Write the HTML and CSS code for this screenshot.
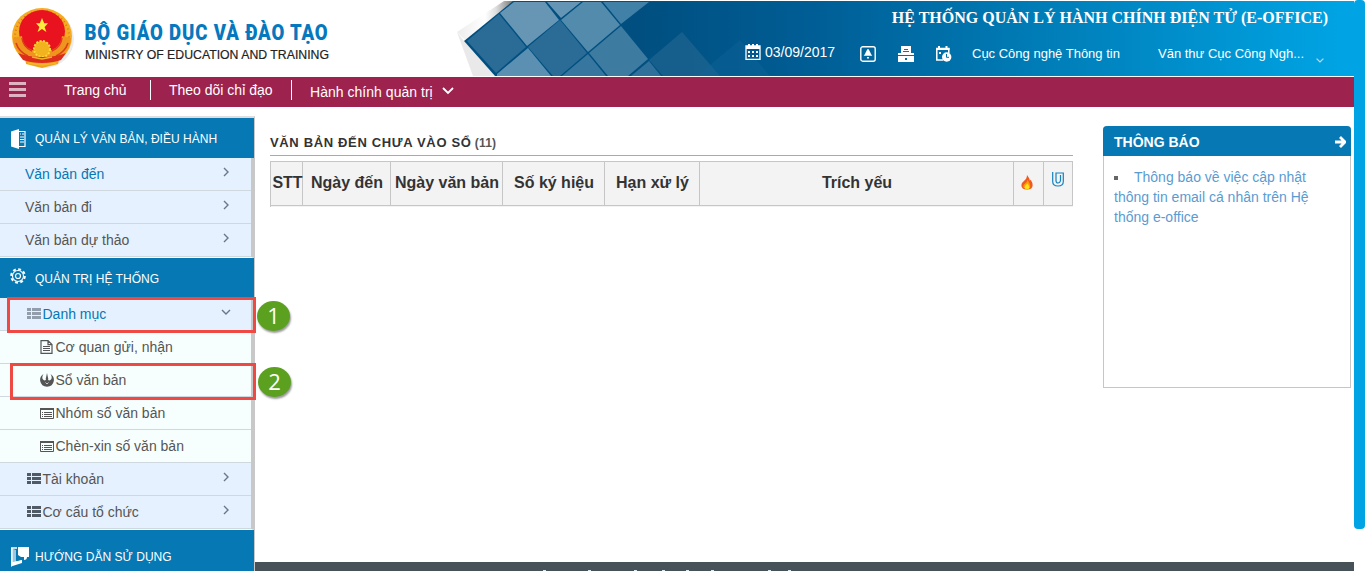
FILE: index.html
```html
<!DOCTYPE html>
<html lang="vi">
<head>
<meta charset="utf-8">
<title>E-Office</title>
<link rel="stylesheet" href="styles.css">
</head>
<body>
<svg class="defs" width="0" height="0">
  <symbol id="chev-right" viewBox="0 0 6 10"><path d="M1 1l4 4-4 4" fill="none" stroke="#68788a" stroke-width="1.4"/></symbol>
  <symbol id="list" viewBox="0 0 14 11"><path d="M0 0h4v3H0zM5 0h9v3H5zM0 4h4v3H0zM5 4h9v3H5zM0 8h4v3H0zM5 8h9v3H5z" fill="currentColor"/></symbol>
  <symbol id="card" viewBox="0 0 14 11"><path d="M.5.5h13v10H.5z" fill="none" stroke="#555"/><path d="M0 0h14v2H0zM2 4h1v1H2zM4 4h8v1H4zM2 6h1v1H2zM4 6h8v1H4zM2 8h1v1H2zM4 8h8v1H4z" fill="#555"/></symbol>
</svg>
<div class="page">
  <div class="screen">
    <header class="top">
      <svg class="logo" width="340" height="75" viewBox="0 1 340 75">
        <ellipse cx="44" cy="39" rx="30" ry="29" fill="#ddd" opacity=".6"/>
        <path d="M25 56l1 8 16 4 16-4 2-8z" fill="#f0a41c"/>
        <ellipse cx="42" cy="36.500" rx="30" ry="28.500" fill="#f6ac22"/>
        <ellipse cx="42" cy="36.500" rx="27" ry="25.500" fill="none" stroke="#dd7a1a" stroke-width="2" stroke-dasharray="1 3"/>
        <ellipse cx="42" cy="31.500" rx="23" ry="21.500" fill="#e8131f"/>
        <path d="M42 18l2.200 5.200H48l-3.400 3.700 1.800 5.200-4.400-3-4.400 3 1.800-5.200-3.400-3.700h3.800z" fill="#ffec3d"/>
        <path d="M13 38l9-2q0 10 10 14h20q9-4 10-14l9 2q-1 15-14 20H28Q14 53 13 38z" fill="#ef941c"/>
        <path d="M22 38q1 9 10 13M62 38q-1 9-10 13M16 43q3 9 12 13M68 43q-3 9-12 13" fill="none" stroke="#df3a1c" stroke-width="1.500"/>
        <circle cx="42" cy="49" r="8" fill="#f2b41e" stroke="#ffd83a" stroke-width="2" stroke-dasharray="2 1.500"/>
        <path d="M18 53q10 4 24 4t24-4l-5 7q-8 3-19 3t-19-3z" fill="#de2c1c"/>
        <path d="M32 57l10 2 10-2M28 63l14 2 14-2" fill="none" stroke="#f3b62a" stroke-width="1.500"/>
        <text class="brand" x="84.500" y="39.500" textLength="244" lengthAdjust="spacingAndGlyphs">BỘ GIÁO DỤC VÀ ĐÀO TẠO</text>
        <text class="brand-sub" x="85" y="59.300" textLength="244" lengthAdjust="spacingAndGlyphs">MINISTRY OF EDUCATION AND TRAINING</text>
      </svg>
      <div class="banner">
        <svg class="banner-art" width="914" height="75" viewBox="440 1 914 75">
          <defs>
            <linearGradient id="sky" gradientUnits="userSpaceOnUse" x1="640" y1="0" x2="1345" y2="0"><stop offset="0" stop-color="#004f80"/><stop offset=".25" stop-color="#005e96"/><stop offset=".55" stop-color="#007bb5"/><stop offset="1" stop-color="#00a4e4"/></linearGradient>
            <linearGradient id="edge" gradientUnits="userSpaceOnUse" x1="457" y1="0" x2="513" y2="0"><stop offset="0" stop-color="#ececec"/><stop offset=".5" stop-color="#fff"/><stop offset=".7" stop-color="#ddd"/><stop offset="1" stop-color="#777"/></linearGradient>
          </defs>
          <path d="M457 32L504 1h14L465 40z" fill="url(#edge)"/>
          <path d="M457 32l7 9 31 35h-22z" fill="#e9e9e9"/>
          <path d="M464 41L513 1h841v75H495z" fill="url(#sky)"/>
          <path d="M467 41l32-27 27 33-30 26z" fill="#2b6c97"/>
          <path d="M500 13l14-11h31l14 18-32 26z" fill="#6796b5"/>
          <path d="M547 2h34l-20 16z" fill="#6595b5"/>
          <path d="M561 20l22-18h18l19 23-32 27z" fill="#538bad"/>
          <path d="M603 2h46l-28 22z" fill="#4281a7"/>
          <path d="M528 47l32-27 27 33-27 23h-7z" fill="#2b6c97"/>
          <path d="M497 74l31-26 23 28h-54z" fill="#5b90b2"/>
          <path d="M562 76l26-22 18 22z" fill="#36769f"/>
          <path d="M589 53l32-27 27 33-20 17h-20z" fill="#3d7ba1"/>
          <path d="M631 76l18-15 12 15z" fill="#2f719b"/>
          <path d="M649 60l33-28 38 44h-57z" fill="#1b638f" opacity=".8"/>
          <path d="M710 65l30-25 30 36h-71z" fill="#11669a" opacity=".35"/>
        </svg>
        <div class="banner-text">
          <div class="sys">HỆ THỐNG QUẢN LÝ HÀNH CHÍNH ĐIỆN TỬ (E-OFFICE)</div>
          <div class="tools">
            <div class="date">
              <svg width="16" height="16" viewBox="0 0 16 16"><path d="M1 2h14v13.300H1z" fill="none" stroke="#fff" stroke-width="1.300"/><path d="M1 2h14v3H1zM3 0h2v3H3zM7 0h2v3H7zM11 0h2v3h-2zM3 7h2v2H3zM7 7h2v2H7zM11 7h2v2h-2zM3 11h2v2H3zM7 11h2v2H7zM11 11h2v2h-2z" fill="#fff"/></svg>
              <span>03/09/2017</span>
            </div>
            <svg class="tool-bell" width="16" height="16" viewBox="0 0 16 16"><rect x=".8" y=".8" width="14.400" height="14.400" rx="2" fill="none" stroke="#fff" stroke-width="1.400"/><path d="M8 3q1 0 1.300 1.500Q10.300 6 11 8l1.300 1.700H3.700L5 8q.7-2 1.700-3.500Q7 3 8 3zM7 11h2v1.500H7z" fill="#fff"/></svg>
            <svg class="tool-drawer" width="16" height="16" viewBox="0 0 16 16"><path d="M3 0h10v7h3v2H0V7h3zM0 10h16v6H0z" fill="#fff"/><path d="M6 3.500h4M5 5.500h6" stroke="#0676ad" stroke-width="1"/><path d="M7 12h2v2H7z" fill="#006da6"/></svg>
            <svg class="tool-cal" width="17" height="16" viewBox="0 0 17 16"><path d="M8 14H1.800V2.500h12V7" fill="none" stroke="#fff" stroke-width="1.500"/><path d="M1 2h13.500v2H1zM3 0h2v3H3zM10.500 0h2v3h-2zM4 6h2v2H4z" fill="#fff"/><circle cx="11.700" cy="11" r="4.700" fill="#fff"/><path d="M11.500 8v3.300H14" fill="none" stroke="#006da6"/></svg>
            <span class="unit">Cục Công nghệ Thông tin</span>
            <span class="user">Văn thư Cục Công Ngh...</span>
            <svg class="caret" width="8" height="5" viewBox="0 0 8 5"><path d="M.6.600L4 4 7.400.600" fill="none" stroke="#b8dcf0" stroke-width="1.200"/></svg>
          </div>
        </div>
      </div>
    </header>
    <nav class="menu">
      <svg class="burger" width="17" height="16" viewBox="0 0 17 16"><path d="M0 0h17v3H0zM0 6h17v3H0zM0 12h17v3H0z" fill="#dfb3c2"/></svg>
      <a class="m1">Trang chủ</a><i class="bar"></i><a class="m2">Theo dõi chỉ đạo</a><i class="bar"></i><a class="m3">Hành chính quản trị</a>
      <svg class="mchev" width="12" height="8" viewBox="0 0 12 8"><path d="M1 1l5 5 5-5" fill="none" stroke="#fff" stroke-width="1.800"/></svg>
    </nav>
    <div class="body">
      <aside class="side">
        <div class="head"><svg width="16" height="20" viewBox="0 0 16 20"><path d="M1 2.500L9 0v20l-8-2.500z" fill="#fff"/><path d="M9 2.500h6v15H9" fill="none" stroke="#fff" stroke-width="1.200"/><path d="M10 5h1M12 5h2M10 8h4M10 10.500h4M10 13h4" stroke="#fff"/></svg><span>QUẢN LÝ VĂN BẢN, ĐIỀU HÀNH</span></div>
        <div class="group">
          <a class="item on">Văn bản đến<svg class="go"><use href="#chev-right"/></svg></a>
          <a class="item">Văn bản đi<svg class="go"><use href="#chev-right"/></svg></a>
          <a class="item">Văn bản dự thảo<svg class="go"><use href="#chev-right"/></svg></a>
        </div>
        <div class="head"><svg class="gear" width="16" height="16" viewBox="0 0 16 16"><circle cx="8" cy="8" r="6.800" fill="none" stroke="#fff" stroke-width="2" stroke-dasharray="2.900 2.440"/><circle cx="8" cy="8" r="5.500" fill="none" stroke="#fff" stroke-width="1.100"/><circle cx="8" cy="8" r="2.500" fill="none" stroke="#fff" stroke-width="1.200"/></svg><span>QUẢN TRỊ HỆ THỐNG</span></div>
        <div class="group">
          <a class="item sub on"><svg class="li pale"><use href="#list"/></svg>Danh mục<svg class="down" viewBox="0 0 10 6"><path d="M1 1l4 4 4-4" fill="none" stroke="#68788a" stroke-width="1.400"/></svg></a>
          <a class="item leaf"><svg class="doc" viewBox="0 0 13 14"><path d="M1 .6h7l4 4v8.800H1zM8 .6v4h4" fill="none" stroke="#555" stroke-width="1.200"/><path d="M3 6.500h7M3 8.500h7M3 10.500h7" stroke="#555"/></svg>Cơ quan gửi, nhận</a>
          <a class="item leaf"><svg class="reb" viewBox="0 0 14 14"><path d="M3.500 1Q-.5 3.500.2 8q1 5.500 6.800 5.800 5.800-.3 6.800-5.800.7-4.500-3.300-7 2.500 4-.1 6-1.500 1-2.400-.5L8.300 6 7 0 5.700 6l.3.500Q5 8 3.600 7 1 5 3.500 1z" fill="#555"/><path d="M5.500 9.500L7 11l1.500-1.500" fill="none" stroke="#f7fffe" stroke-width=".7"/></svg>Sổ văn bản</a>
          <a class="item leaf"><svg class="li"><use href="#card"/></svg>Nhóm số văn bản</a>
          <a class="item leaf"><svg class="li"><use href="#card"/></svg>Chèn-xin số văn bản</a>
          <a class="item sub"><svg class="li"><use href="#list"/></svg>Tài khoản<svg class="go"><use href="#chev-right"/></svg></a>
          <a class="item sub"><svg class="li"><use href="#list"/></svg>Cơ cấu tổ chức<svg class="go"><use href="#chev-right"/></svg></a>
        </div>
        <div class="head last"><svg class="guide" width="19" height="20" viewBox="0 0 19 20"><path d="M7 1H1.800v15.500L12 14" fill="none" stroke="#fff" stroke-width="1.600"/><path d="M1 1l5 2v13l-5 4z" fill="#fff" opacity=".6"/><path d="M1 19.500v-4l11-2.500v3z" fill="#fff"/><path d="M8 0h11v10h-2q0 3-3 3v-3h-3l-3-2z" fill="#fff"/></svg><span>HƯỚNG DẪN SỬ DỤNG</span></div>
        <div class="mark box1"></div><div class="mark box2"></div>
        <div class="num n1">1</div><div class="num n2">2</div>
      </aside>
      <div class="work">
        <div class="content">
          <main>
            <h1>VĂN BẢN ĐẾN CHƯA VÀO SỔ <small>(11)</small></h1>
            <div class="grid">
              <div class="stt">STT</div><div>Ngày đến</div><div>Ngày văn bản</div><div>Số ký hiệu</div><div>Hạn xử lý</div><div>Trích yếu</div>
              <div><svg class="fire" width="12" height="15" viewBox="0 0 12 16"><path d="M6 0q3 4 3 6l1-1q2 3 2 6 0 4.500-6 4.500T0 11q0-3 3-5Q6 4 6 0z" fill="#f0591b"/><path d="M6.500 5q3 4 3 7 0 3-3.500 3t-4-3q0-2 2-3t2.500-4z" fill="#ff9c0a"/><path d="M6.500 9q2 2 2 4T6 15t-2.500-2T6.500 9z" fill="#ffe51a"/></svg></div>
              <div><svg class="clip" width="12" height="15" viewBox="0 0 12 15"><path d="M.7 0v9.500q0 4.500 5.300 4.500t5.300-4.500V1H4v7.500Q4 11 6 11t2.500-2.500V3" fill="none" stroke="#1681be" stroke-width="1.200"/></svg></div>
            </div>
          </main>
          <section class="news">
            <h2>THÔNG BÁO<svg width="11" height="12" viewBox="0 0 11 12"><path d="M0 6h9M5 1l5 5-5 5" fill="none" stroke="#fff" stroke-width="2.800"/></svg></h2>
            <p><i></i>Thông báo về việc cập nhật thông tin email cá nhân trên Hệ thống e-office</p>
          </section>
        </div>
        <footer><svg width="270" height="1" viewBox="540 0 270 1"><path d="M543 0h3M588 0h3M634 0h3M662 0h3M686 0h3M711 0h3M768 0h3M788 0h3" stroke="#dbe8ee" stroke-width="2"/></svg></footer>
      </div>
    </div>
  </div>
  <div class="rail"></div>
</div>
</body>
</html>
```
FILE: styles.css
```css
* { box-sizing: border-box; }
body { margin: 0; background: #fff; font: 14px/20px "Liberation Sans", Arial, sans-serif; color: #555; overflow: hidden; }
svg { display: block; flex: none; }
.defs { position: absolute; }
.page { display: flex; height: 571px; }
.screen { width: 1354px; display: flex; flex-direction: column; }
.rail { width: 11px; height: 529px; background: #00a4e4; border-radius: 4px; }

.top { height: 77px; padding: 1px 0; display: flex; flex: none; }
.logo { margin-right: 100px; overflow: visible; }
.brand { font: 900 22px Roboto, sans-serif; fill: #0678be; letter-spacing: 1px; }
.brand-sub { font: 13.5px "Liberation Sans", sans-serif; fill: #222; stroke: #222; stroke-width: .2; }
.banner { position: relative; width: 914px; height: 75px; color: #fff; }
.banner-art { position: absolute; left: 0; top: 0; }
.banner-text { position: relative; }
.sys { font: bold 16px/20px "Liberation Serif", serif; text-align: right; padding: 7px 26px 0 0; white-space: nowrap; }
.tools { display: flex; align-items: flex-start; padding: 14px 0 0 305px; font-size: 13px; white-space: nowrap; }
.date { display: flex; gap: 4px; width: 115px; font-size: 14px; margin-top: 2px; }
.date span { margin-top: -2px; }
.tool-bell, .tool-drawer, .tool-cal { margin-top: 4px; }
.tool-drawer { margin-left: 22px; }
.tool-cal { margin-left: 21px; }
.unit { width: 186px; margin: 2px 0 0 20px; }
.user { width: 158px; margin-top: 2px; }
.caret { margin-top: 16px; }

.menu { height: 30px; flex: none; background: #9e224e; color: #fff; display: flex; align-items: flex-start; padding-left: 9px; white-space: nowrap; }
.burger { margin-top: 5px; }
.menu a { line-height: 20px; margin-top: 3px; }
.menu .m1 { width: 86px; margin-left: 38px; }
.menu .m2 { width: 122px; margin-left: 18px; }
.menu .m3 { width: 132px; margin: 5px 0 0 18px; letter-spacing: .03px; }
.bar { width: 1px; height: 20px; background: #fff; margin-top: 3px; }
.mchev { margin-top: 10px; }

.body { display: flex; flex: 1; min-height: 0; }
.side { position: relative; width: 255px; height: 455px; margin-top: 9px; border-top: 2px solid #dedede; border-right: 1px solid #c8c8c8; flex: none; }
.head { height: 40px; background: #0678b4; color: #fff; display: flex; align-items: center; padding: 1px 0 0 10px; font-size: 12px; letter-spacing: .03px; white-space: nowrap; }
.head span { margin-left: 9px; }
.gear { margin-top: -5px; }
.head.last { height: 41px; padding-top: 12px; }
.head.last span { margin-left: 6px; }
.group { border-right: 3px solid #c8c8c8; border-bottom: 1px solid #fff; }
.item { height: 33px; display: flex; background: #e5f1fe; border-bottom: 1px solid #cfd8df; padding: 6px 0 0 25px; white-space: nowrap; }
.on { color: #0678b4; }
.sub { padding-left: 27px; }
.leaf { background: #f7fffe; padding-left: 40px; }
.go { width: 6px; height: 10px; margin: 3px 22px 0 auto; }
.down { width: 10px; height: 6px; margin: 5px 20px 0 auto; }
.li { width: 14px; height: 11px; margin: 4px 1.5px 0 0; color: #505a66; }
.leaf .li { margin-top: 5px; }
.item .pale { color: #929eac; }
.doc { width: 13px; height: 14px; margin: 3px 2.500px 0 0; }
.reb { width: 14px; height: 14px; margin: 3px 1.500px 0 0; }
.mark { position: absolute; border: 3px solid #ee4a43; right: -2px; }
.box1 { left: 7px; top: 179px; height: 36px; }
.box2 { left: 10px; top: 245px; height: 37px; }
.num { position: absolute; width: 33px; height: 30px; border-radius: 50%; background: #5ba01f; color: #fff; font: 22px/29px "Open Sans", sans-serif; text-align: center; box-shadow: 1px 2px 2px rgba(0,0,0,.4); }
.n1 { left: 257px; top: 183px; }
.n2 { left: 258px; top: 249px; }

.work { flex: 1; display: flex; flex-direction: column; }
.content { flex: 1; display: flex; gap: 30px; padding: 19px 3px 0 15px; }
main { width: 803px; }
h1 { margin: 0; height: 30px; padding-top: 7px; font-size: 13px; line-height: 20px; letter-spacing: .65px; color: #333; border-bottom: 1px solid #aaa; white-space: nowrap; }
small { font-size: 12px; letter-spacing: .2px; margin-left: -1px; color: #555; }
.grid { display: grid; grid-template-columns: 32px 88px 112px 102px 95px 314px 30px 29px; height: 46px; margin-top: 5px; background: #f3f3f3; border: 1px solid #c6c6c6; border-right: 0; border-bottom: 0; font-size: 16px; font-weight: bold; color: #333; white-space: nowrap; }
.grid div { height: 44px; border-right: 1px solid #c6c6c6; border-bottom: 1px solid #c6c6c6; display: flex; justify-content: center; align-items: center; padding: 0 0 2px 1px; }
.grid .stt { padding-left: 2px; }
.grid .fire { margin-left: -4px; }
.grid .clip { margin: -7px 0 0 -2px; }
.news { width: 248px; height: 262px; border: 1px solid #c6c6c6; border-top: 0; border-radius: 4px 4px 0 0; }
h2 { margin: 0 -1px; height: 30px; padding: 1px 5px 0 11px; background: #0678b4; color: #fff; font-size: 14px; border-radius: 4px 4px 0 0; display: flex; align-items: center; justify-content: space-between; }
.news p { margin: 11px 30px 0 10px; color: #5b9bd1; }
.news i { display: inline-block; width: 4px; height: 4px; background: #666; margin-right: 16px; vertical-align: 2px; }
footer { height: 9px; background: #465257; padding: 8px 0 0 285px; }
```
